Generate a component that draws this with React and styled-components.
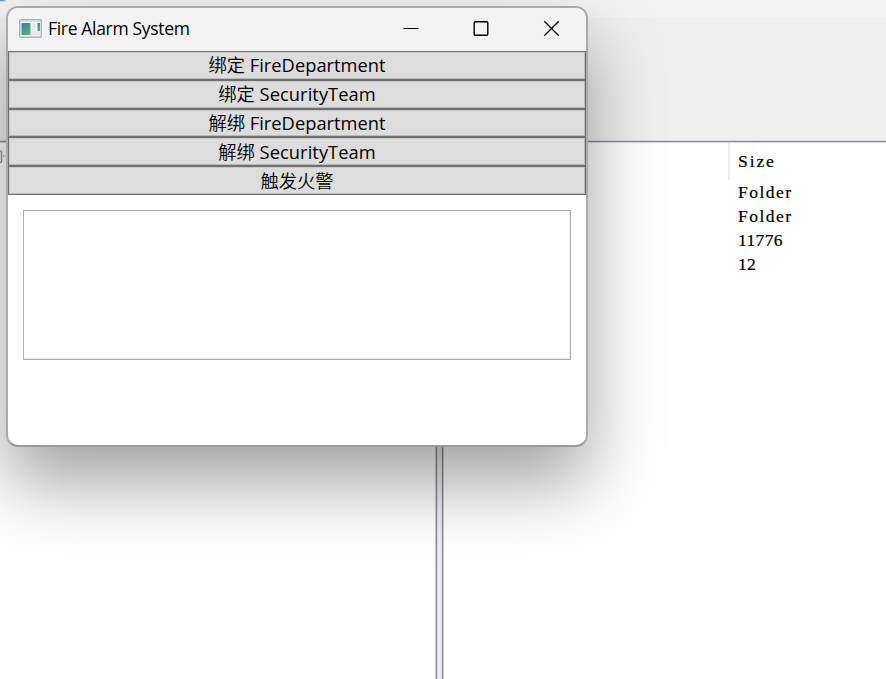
import React from "react";
import styled, { createGlobalStyle } from "styled-components";

const GlobalStyle = createGlobalStyle`
  * { box-sizing: border-box; }
  body { margin: 0; background: #fff; overflow: hidden; }
`;

const Desktop = styled.main`
  position: relative;
  width: 886px;
  height: 679px;
  overflow: hidden;
  display: flex;
  flex-direction: column;
  background: #fff;
`;

const MenuStrip = styled.div`
  flex: 0 0 17px;
  background: #f3f3f3;
`;

const AppGlyph = styled.svg`
  display: block;
  width: 8px;
  height: 4px;
`;

const ToolArea = styled.div`
  flex: 0 0 125px;
  background: #efefef;
  border-bottom: 1px solid #898e95;
  box-shadow: inset 0 -1px #d6d7d8, 0 1px #d3d8dc;
`;

const Workspace = styled.div`
  flex: 1;
  display: flex;
`;

const TreePane = styled.section`
  width: 435px;
  padding-top: 8px;
`;

const TreeGlyph = styled.svg`
  display: block;
  width: 9px;
  height: 14px;
`;

const Splitter = styled.div`
  width: 9px;
  background: #f0f0f0;
  border: solid #cbcdd1;
  border-width: 0 1px;
  box-shadow: inset 1px 0 #8b8d98, inset -1px 0 #8b8d98, inset 2px 0 #dcdde0, inset -2px 0 #dcdde0;
`;

const FilePane = styled.section`
  flex: 1;
  display: flex;
  justify-content: flex-end;
`;

const SizeColumn = styled.div`
  width: 158px;
  font: 17.5px/24px "Liberation Serif", serif;
  color: #000;
  -webkit-text-stroke: 0.2px #000;
`;

const ColumnHeader = styled.div`
  height: 37px;
  margin-top: 1px;
  padding: 6px 0 0 8px;
  border-left: 2px solid #ececec;
  letter-spacing: 1.9px;
`;

const SizeCell = styled.div`
  height: 24px;
  padding: 0 0 0 10px;
  letter-spacing: ${(p) => (p.$numeric ? 0.35 : 1.5)}px;
`;

const Window = styled.article`
  position: absolute;
  left: 6px;
  top: 6px;
  width: 582px;
  height: 441px;
  display: flex;
  flex-direction: column;
  border: 2px solid #aaa;
  border-bottom-color: #999;
  border-radius: 12px;
  background: #fff;
  box-shadow: 0 36px 72px rgba(0, 0, 0, 0.37);
  color: #000;
`;

const TitleBar = styled.header`
  height: 43px;
  display: flex;
  align-items: center;
  padding: 0 27px 3px 11px;
  background: #f3f3f3;
  border-radius: 10px 10px 0 0;
`;

const WindowIcon = styled.svg`
  width: 23px;
  height: 19px;
`;

const Title = styled.h1`
  flex: 1;
  margin: 0 0 0 6px;
  font-family: "Open Sans", sans-serif;
  font-size: 17.5px;
  font-weight: 400;
  letter-spacing: -0.32px;
  line-height: 24px;
`;

const Controls = styled.div`
  display: flex;
  gap: 54px;
`;

const ControlIcon = styled.svg`
  width: 16px;
  height: 16px;
  fill: none;
  stroke: #000;
`;

const ButtonStack = styled.div`
  display: grid;
  grid-template-rows: repeat(5, 28.8px);
`;

const ActionButton = styled.button`
  width: 100%;
  padding: 0;
  border: 1px solid #707070;
  border-radius: 0;
  background: #ddd;
  box-shadow: inset -1px -1px #b9b9b9, inset 1px 1px #c9c9c9;
  color: #000;
  font-family: "Open Sans", "Noto Sans CJK SC", sans-serif;
  font-weight: 350;
  font-size: 18.3px;
  line-height: 26px;
`;

const Latin = styled.span`
  font-weight: 400;
  letter-spacing: ${(p) => p.$tracking}px;
`;

const LogBox = styled.div`
  height: 150px;
  margin: 15px 15px 0;
  border: 1px solid #abadb3;
  box-shadow: inset -1px -1px #e9eaee;
  background: #fff;
`;

const actions = [
  { verb: "绑定", target: "FireDepartment", tracking: 0.02 },
  { verb: "绑定", target: "SecurityTeam", tracking: 0.06 },
  { verb: "解绑", target: "FireDepartment", tracking: 0.02 },
  { verb: "解绑", target: "SecurityTeam", tracking: 0.06 },
  { verb: "触发火警" },
];

const sizes = ["Folder", "Folder", "11776", "12"];

export default function App() {
  return (
    <>
      <GlobalStyle />
      <Desktop>
        <MenuStrip>
          <AppGlyph viewBox="0 0 8 4">
            <path d="M0 0h4v1H0z" fill="#3565b7" />
            <path d="M0 1h5.5V0" fill="none" stroke="#a9b8d4" />
          </AppGlyph>
        </MenuStrip>
        <ToolArea />
        <Workspace>
          <TreePane>
            <TreeGlyph viewBox="0 0 9 14">
              <path d="M0 .8h.5Q1.5.8 1.5 2v9.5q0 1-1 1H0" fill="none" stroke="#888" strokeWidth="1.3" />
              <path d="M3 6h1.3M5.7 6h1.3" stroke="#666" />
            </TreeGlyph>
          </TreePane>
          <Splitter />
          <FilePane>
            <SizeColumn>
              <ColumnHeader>Size</ColumnHeader>
              {sizes.map((size, i) => (
                <SizeCell key={i} $numeric={/^\d/.test(size)}>{size}</SizeCell>
              ))}
            </SizeColumn>
          </FilePane>
        </Workspace>

        <Window>
          <TitleBar>
            <WindowIcon viewBox="0 0 23 19">
              <defs>
                <linearGradient id="pane" x1="0" y1="0" x2=".6" y2="1">
                  <stop offset="0" stopColor="#437a9c" />
                  <stop offset="1" stopColor="#53b17c" />
                </linearGradient>
              </defs>
              <rect x=".75" y=".75" width="21.5" height="17.5" rx="1" fill="#f4f5f7" stroke="#aeb4bc" strokeWidth="1.4" />
              <path d="M2 2h19" stroke="#ccd2d9" strokeWidth="1" />
              <rect x="2.5" y="4" width="9" height="12" fill="url(#pane)" />
              <path d="M13 4h4v7h-4zM13 12h8v4h-8z" fill="#e8e9eb" />
              <rect x="18.5" y="4" width="2.5" height="8" fill="url(#pane)" />
            </WindowIcon>
            <Title>Fire Alarm System</Title>
            <Controls>
              <ControlIcon viewBox="0 0 16 16">
                <path d="M.5 8.5h15" />
              </ControlIcon>
              <ControlIcon viewBox="0 0 16 16">
                <rect x="1.2" y="1.7" width="13.6" height="13.6" rx="1.2" strokeWidth="1.4" />
              </ControlIcon>
              <ControlIcon viewBox="0 0 16 16">
                <path d="M1.3 1.3l14.4 14.4M15.7 1.3L1.3 15.7" strokeWidth="1.3" />
              </ControlIcon>
            </Controls>
          </TitleBar>
          <ButtonStack>
            {actions.map((a) => (
              <ActionButton key={a.verb + a.target}>
                {a.verb}
                {a.target && <Latin $tracking={a.tracking}> {a.target}</Latin>}
              </ActionButton>
            ))}
          </ButtonStack>
          <LogBox />
        </Window>
      </Desktop>
    </>
  );
}
